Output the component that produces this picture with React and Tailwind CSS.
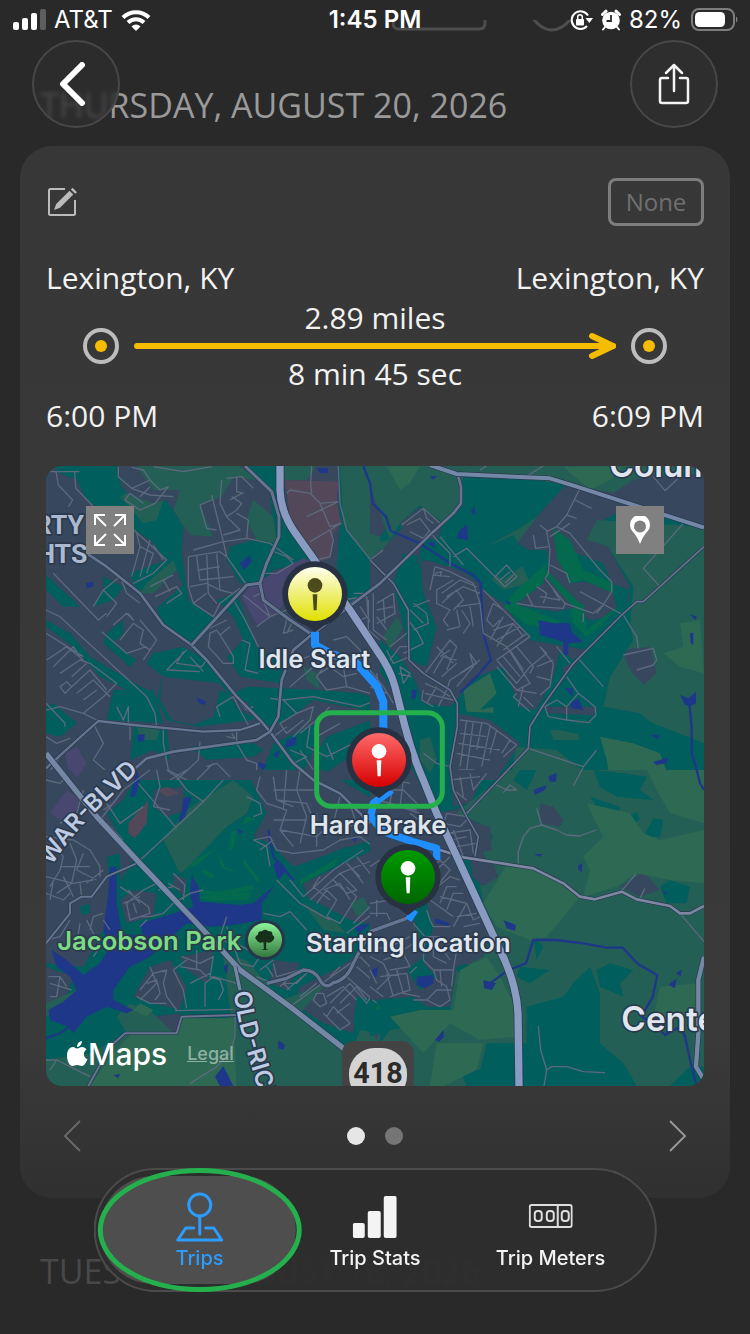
import React from 'react';

// The map is drawn in four tiles, each with its own origin.
const tiles = [
  {
    x: 0,
    y: 0,
    urban: 'M18 18H1020V960H18Z',
    wood: [
      'M40 18 230 18 245 80 300 150 380 120 430 200 425 280 445 420 520 475 460 555 365 490 350 445 430 375 405 320 330 380 290 395 270 340 380 300 330 240 250 190 140 120 110 60 60 40Z',
      'M620 18 725 18 730 150 770 230 820 300 700 330 660 375 600 370 560 300 570 260 640 240 700 230 690 100Z',
      'M18 345 100 420 120 440 70 440 18 390Z M18 480 90 520 150 590 320 690 330 720 280 700 180 650 100 560 18 500Z',
      'M190 350 250 380 220 420 160 440 190 390Z M200 520 250 480 250 520 220 550 290 600 270 620 190 550Z',
      'M340 580 430 560 500 600 580 700 620 680 830 690 960 700 1020 720 1020 760 820 720 740 780 690 800 600 750 540 670 370 650 320 610Z',
      'M365 650 350 720 380 780 470 800 640 780 625 730 585 710 540 690 520 770 460 795 395 780 360 720Z',
      'M280 690 340 690 370 790 200 780 220 690Z M40 730 110 790 60 830 18 820 18 740Z M280 800 380 800 390 900 340 870 270 900Z',
      'M530 420 590 400 650 560 700 590 740 620 720 670 600 650 560 590 610 540 580 470Z',
      'M895 18 1020 18 1020 370 940 430 900 400 890 320 900 200Z M450 860 550 850 640 850 670 870 640 890 500 900Z M700 850 830 790 820 870 780 960 720 960 670 930Z',
      'M860 830 1020 770 1020 830 870 930 830 960 830 880Z',
    ],
    field: [
      'M290 18 600 18 650 60 580 50 545 110 480 135 520 230 450 225 400 150 420 90 340 90Z',
      'M640 120 700 170 710 250 650 240 620 180Z M730 18 830 18 800 60 735 60Z M900 18 1020 18 1020 330 960 260 910 190Z',
      'M400 300 410 330 340 400 300 400 320 370Z M340 130 370 120 350 180 310 190 240 110 260 100Z M290 800 360 810 350 840 300 840Z M790 620 830 640 840 690 800 660Z',
    ],
    olive: [],
    golf: [],
    purple: ['M640 370 700 340 790 295 830 310 780 350 740 420 700 470 650 495 605 410Z M75 880 110 860 140 910 115 950 85 930Z'],
    brick: ['M735 60 895 65 890 130 905 190 880 220 870 295 840 305 790 240 750 170Z'],
    water: ['M600 310 630 285 635 305 612 330Z M138 370 160 365 160 380 140 385Z M470 712 500 725 490 735 475 728Z M290 825 315 822 312 843 295 845Z M740 840 770 830 765 855 735 865Z M700 885 720 870 712 895Z M655 905 680 915 670 930 655 920Z M830 25 865 25 862 40 840 38Z'],
    streets: [
      'M18 35 118 35M48 35 55 75 98 120 85 140M104 35 107 85 170 150 185 190M235 20 235 50 275 85 330 105 400 110M275 85 330 60 360 90 385 80 345 130 300 150 255 120 270 100 310 130M330 60 310 30 275 22M300 110 330 80M340 20 430 35 515 20',
      'M515 105 550 245 560 290 620 375M550 245 460 270M550 245 620 235 690 250 760 300M480 135 515 120M480 135 500 205 530 210M560 55 605 50 640 85M545 60 540 130 560 170 600 210 550 225M590 50 590 95 612 100M560 170 590 150 605 130 575 110M620 235 625 180 590 160M605 100 570 120',
      'M445 290 540 275 560 290M445 290 445 380 460 430 520 470 540 430 600 385M470 285 475 330 540 320M500 280 505 400 530 430M475 330 480 360 580 350M530 280 540 390 580 400M450 380 500 370 540 390M460 430 500 400',
      'M260 190 380 300 340 340 280 370M290 220 300 260 275 350M330 240 300 350M300 260 340 280 320 340M340 255 370 300',
      'M160 440 190 390 240 350 260 400 300 430M190 390 230 430 200 470M240 350 290 390M330 380 400 345M345 410 410 380 425 400 380 430M370 360 390 395M200 460 175 480 40 340M220 495 260 460 280 480 265 460M240 540 280 490 310 510 300 550 330 570 350 540 310 600M185 515 260 580 320 560M350 540 300 480',
      'M18 450 60 470 320 710 345 760 350 800M18 520 130 590M20 600 80 560 130 600M40 620 100 560 120 590M60 640 120 600 150 610 190 640 230 670 190 710 130 760M95 650 140 610M60 680 80 665 95 680 75 700ZM95 680 150 630 200 690M110 700 160 660 210 710M130 720 170 690M230 740 250 780 265 740 265 790M18 750 60 740 130 760 170 780M18 730 75 790 75 800M270 795 270 840M370 800 370 850 385 930 440 960',
      'M510 520 530 510 550 540 580 590 580 610 550 610 505 560ZM500 510 560 480M540 525 570 500M380 630 440 570M430 575 410 610 485 620 500 600M450 590 490 635M380 630 480 635M580 420 610 470 655 560M605 540 630 550 615 630 655 640M590 710 620 750 640 740M540 770 530 740 580 710 600 750 625 795M590 815 590 850 620 900 650 910 650 960M560 830 585 835 575 820M480 845 475 900 410 960M500 920 530 910 570 950M470 960 520 910',
      'M740 100 750 90 810 100 840 130 895 125M815 18 812 70 815 100M800 170 895 125M840 130 870 200 905 190M810 245 870 210 880 240 870 290 830 300M870 210 900 190M895 18 900 130 920 210 1000 310M610 405 690 470 740 450M640 410 660 400 690 470 650 500M690 270 740 290 760 310M670 340 710 340 760 310M700 440 740 480 730 520 760 510M760 480 740 520',
      'M780 600 850 570 860 610 830 650 860 690 920 680 990 700M860 600 910 620 920 680M880 540 920 530 960 570 1000 640M820 620 750 680M840 640 870 620 910 650 950 640M690 715 730 720 820 710 960 740 1010 720M730 720 770 760 720 790 740 820 790 780M770 760 820 740 810 780 760 830M740 800 700 830M780 820 830 780 870 740M810 800 800 860 860 890 1000 820M830 830 900 790M750 870 800 890 760 910M780 870 820 930M860 850 880 900',
      'M1000 410 1000 500 960 440M905 420 980 410 985 470 960 480M930 430 975 400 940 400M985 420 985 510 1020 540M18 830 50 850 90 835M18 950 60 890M390 960 440 930M160 790 190 850 160 900 230 960',
    ],
  },
  {
    x: 990,
    y: 0,
    urban: 'M140 310 190 150 100 190 150 140 220 190 200 240 140 230 100 200 40 260 0 300V500L30 540 90 590 130 650 150 700 160 730 240 740 320 650 400 620 450 740 500 750 550 650 570 570 610 600 650 570 480 540 400 430 340 390 320 350 240 320 170 300Z M0 90 60 190 30 230 0 220Z M100 280 150 290 160 400 200 500 170 620 120 600 100 500 70 370Z M370 340 430 290 440 350 400 380Z M440 250 500 170 600 60 700 30 850 50 1002 30 1002 200 800 130 700 180 650 230 720 270 780 380 780 410 750 470 660 480 590 440 530 450 440 430 520 370 540 320 530 270 480 270Z M580 620 680 580 630 650 680 740 660 790 550 780 520 740 580 700Z M770 550 850 570 860 640 820 675 760 610Z M260 760 360 780 450 850 380 960 240 960Z M0 600 40 650 90 730 130 960 0 960Z',
    wood: [],
    field: [
      'M0 18 1002 18 1002 40 850 50 740 100 500 60 280 45 270 130 230 180 350 260 440 210 500 170 440 280 480 370 400 390 300 300 220 190 150 135 90 190 60 240 0 80Z',
      'M650 240 680 180 1002 200 1002 860 880 820 810 760 700 740 720 650 780 540 700 560 780 500 790 380 720 270Z',
      'M440 860 560 870 650 940 660 960 420 960Z M540 810 620 810 630 840 550 840Z M150 840 180 830 200 900 180 940 150 900Z M40 530 80 470 100 500 60 570Z M0 250 60 240 30 280Z',
    ],
    urbanTop: 'M90 190 150 140 210 190 180 235 110 225Z M440 250 500 175 540 175 600 85 640 80 720 105 790 60 860 40 930 60 1002 40 1002 200 800 140 730 150 680 180 650 240 720 260 700 310 780 400 720 470 620 440 560 455 440 435 520 370 540 310 530 265 480 270Z M755 570 840 560 860 640 820 675 780 630Z',
    woodTop: 'M240 165 350 260 430 225 480 300 400 360 370 340 430 290 340 380 250 310 200 240Z M690 520 780 500 790 540 720 650 690 740 500 740 640 590Z M530 760 800 770 1002 850 1002 880 850 870 520 800Z M720 370 780 390 760 460 650 550 600 500 660 500 740 440Z M620 280 700 310 725 370 720 395 650 365 600 370Z',
    olive: [
      'M50 18 150 18 120 70 90 90Z M280 690 360 640 380 700 330 750 370 740 370 758 290 755Z M930 490 990 480 1002 640 930 620 880 580 940 560Z M690 830 790 850 870 880 900 960 720 960 710 900Z',
      'M580 20 760 20 720 60 660 90Z',
    ],
    golf: ['M550 205 600 240 640 330 730 370 730 400 640 360 600 370 560 290Z M530 330 640 440 640 470 590 420 520 340Z M400 440 440 390 530 310 520 370 440 430 480 500Z M430 430 560 480 650 550 600 520 460 490Z M600 450 640 430 650 510 740 440 760 420 690 500 650 530 610 490Z'],
    purple: [],
    brick: [],
    water: ['M505 480 550 490 600 490 605 515 640 545 595 550 595 585 580 585 580 545 510 525Z M290 195 295 240 260 235 270 210Z M315 138 315 165 302 155Z M180 50 202 47 190 60Z M170 250 195 245 192 262Z M600 730 625 715 640 750 605 745Z M585 685 608 685 608 710Z M125 690 140 690 138 715 125 718Z M960 520 970 518 970 555 962 550Z M930 705 955 715 978 695 978 730 960 738 945 735Z M850 905 895 893 890 910 858 915Z M840 825 865 825 865 837Z M545 945 560 935 560 960 540 960Z M405 420 425 428 415 435Z M960 462 982 470 975 480Z'],
    creek: ['M-20 18 0 70 8 130 48 170 62 213 150 250 240 310 310 345 332 370 340 520 363 600 320 650 270 698M958 730 965 800 965 880 990 960'],
    streets: [
      'M0 300 40 270M95 195 160 145 210 190M110 195 150 175 180 215 200 240M120 215 160 235 180 210M160 145 170 175 190 190M200 240 240 280 240 320M210 230 280 315M250 290 290 265 405 380 440 350 410 315 375 350M390 360 420 335M405 370 430 345M330 30 350 18M475 45 520 18M630 85 590 165 560 200 530 215 540 270 535 340 525 355M590 165 620 175M615 120 665 145M510 195 535 215M490 225 497 265 535 260M560 200 600 220 690 330 725 365 725 395 700 435 670 460 585 430 525 355',
      'M540 315 590 340 600 370M440 430 500 440 580 445 585 430M470 400 490 440M500 380 530 400 520 430M510 410 570 420 550 390M630 395 760 465 800 530 805 565M700 435 680 460M640 460 640 485M850 50 885 92 930 50M940 190 820 325 870 380M760 585 850 565 860 600 850 615 800 630M625 595 700 680M590 650 625 700 675 740 678 765 655 788 590 780 535 770 525 740 560 720 590 740 590 780M625 700 590 740',
      'M195 320 240 335 310 370 330 430 340 520 410 560 480 670 440 690M195 320 180 390M190 345 240 350M195 340 215 335 210 350M250 360 200 390 200 430 240 450 220 480 235 500M215 400 270 360 320 380M230 410 280 380 330 400M215 430 260 390 280 420 250 450M260 440 330 430M260 450 270 500 230 510M275 450 300 490 280 520M300 440 310 500M180 420 130 440',
      'M340 390 480 530 380 600M370 430 350 480 370 500 390 480M370 510 430 490 460 530M380 540 450 500M400 570 470 520M400 470 360 540M430 490 380 560M400 450 370 430M380 600 440 670 480 620 530 580 510 560M380 620 440 690 500 700M440 700 430 710 480 755M460 680 445 740M400 590 450 650M420 570 460 630M440 560 490 620 480 640M500 620 550 600M510 560 550 610 540 680 510 705M500 650 540 660M460 710 490 740',
      'M20 430 70 400 75 460 20 490M10 400 10 510 50 540M20 450 70 440M20 470 50 510M40 420 45 490M130 430 170 460 175 490 130 510M120 450 160 490M115 480 145 520M140 510 160 550 100 580M60 560 110 520M50 570 70 610 120 590M60 600 90 560 120 560M90 620 120 640 100 670ZM85 640 125 650',
      'M165 640 240 540 260 560 230 630M190 640 220 590 260 600M215 650 260 610M230 690 240 660 320 610 300 580 310 620 260 680M200 560 250 610M210 590 240 570M270 640 330 600M165 670 210 690 240 710M160 690 155 720 190 740M200 680 170 730M230 690 205 740M165 700 250 720',
      'M270 780 350 790 440 855 400 890M290 780 270 920M310 785 290 930M335 790 320 870M360 800 335 920M380 810 360 880M270 820 350 830M265 850 390 870M260 880 360 900M265 930 310 930 340 960M420 840 395 880M160 880 200 910 240 920M475 865 640 920 680 870M640 920 610 1000M0 630 40 680 70 730M0 680 50 700M20 640 30 720M540 230 600 190M560 560 600 610',
    ],
  },
  {
    x: 0,
    y: 930,
    urban: 'M18 0 300 0 250 90 200 130 280 270 230 350 190 480 130 590 18 580Z M340 60 430 50 440 120 380 140 340 110Z M620 0 850 0 1020 100 1020 200 760 290 690 220 640 200 680 130Z M790 340 1020 230 1020 470 930 450 800 380Z M400 310 440 330 430 380 400 350Z M280 360 350 370 340 440 260 460 240 390Z M330 590 390 570 440 650 420 720 340 700 280 680Z M420 560 520 540 500 640 440 600Z M18 590 100 620 80 680 18 700Z M700 570 780 580 740 660 690 640Z M780 650 900 590 1020 500 1020 750 950 700 940 790 850 760 760 700Z M330 740 420 730 420 790 330 790Z M18 870 100 900 150 948 18 948Z',
    wood: ['M120 410 150 400 150 430 125 435Z M200 260 240 250 240 340 210 350Z M820 270 920 230 950 240 870 290 780 300Z M950 680 1020 690 1020 790 940 760Z'],
    field: [
      'M440 120 580 30 640 80 620 130 560 170 440 295 420 310 370 210Z M270 700 340 730 400 790 430 790 590 735 600 948 18 948 18 870 150 850 260 790 230 740Z M550 560 620 570 760 730 910 840 910 948 600 948Z M790 400 890 460 920 490 850 480Z M930 400 970 380 990 420 950 440Z M1020 790 960 780 940 830 1020 850Z M18 700 110 660 90 700 18 740Z M860 640 770 740 700 700Z',
    ],
    olive: ['M430 745 580 745 590 948 150 948 220 850 270 795 410 795Z M300 700 340 720 320 740 280 720Z'],
    golf: [
      'M435 300 465 270 530 235 470 285Z M530 240 555 290 600 310 545 295Z M480 300 510 325 530 320 500 300Z M565 240 575 185 590 180 580 235Z M620 140 650 145 605 165Z M610 265 660 330 650 335 610 280Z M435 355 530 365 640 345 640 360 530 380Z',
      'M450 380 600 368 640 365 620 390 520 392Z M780 330 900 260 880 290 780 345Z',
    ],
    purple: ['M30 130 80 60 120 90 100 140 60 150Z M90 0 130 0 110 20Z'],
    brick: ['M265 160 325 90 320 160 285 205 265 190Z M350 60 380 50 420 70 380 80Z'],
    water: [
      'M210 290 230 290 230 400 245 490 310 500 300 460 370 440 460 410 450 370 455 315 475 350 480 395 600 405 640 400 705 345 665 400 665 450 580 465 510 470 440 460 330 560 270 590 220 660 220 690 280 720 260 730 200 710 140 740 100 790 85 770 30 750 25 720 70 695 110 660 90 620 50 590 35 540 80 570 130 615 180 580 210 530 190 480 205 370Z',
      'M270 80 290 0 300 30 285 80Z M430 85 455 80 435 140 415 160 425 120Z M700 285 715 270 740 300 715 330Z M940 470 990 460 960 490Z M1000 600 1015 595 1010 620Z M715 810 735 825 730 840 715 835Z M525 920 550 888 580 948 540 948Z M550 590 565 580 560 615Z M590 175 608 185 598 192Z M220 915 240 912 235 925Z M930 205 955 200 945 215Z',
    ],
    creek: ['M18 805 60 790 100 760M685 180 700 260 760 330'],
    streets: [
      'M18 30 60 40 80 20M60 160 110 130 130 60M290 280 490 95 440 60 410 20 380 0M490 95 550 30M295 40 410 175M180 150 250 60 330 0M190 120 220 100 250 60M350 0 360 50 340 110 390 120M200 100 240 160 310 110M18 200 100 210 150 240 180 290 180 320M30 210 70 260 60 300 30 350M90 220 110 270 95 340 50 370M18 320 100 340 160 330M130 250 110 300 170 330M60 290 150 290M18 370 70 390 90 370M40 330 30 390M70 320 100 380M140 340 190 300M125 380 120 340M155 380 180 350M190 430 160 440 150 480M90 450 60 500 20 510M120 460 110 520 80 540M140 450 180 530 160 560M190 450 210 480',
      'M240 350 270 370 325 410 330 430 270 450 260 400 310 360 350 340M265 360 300 400M250 400 300 380M290 430 280 400M300 440 330 440 370 430 400 400 450 370 490 360M400 310 435 345 430 390M385 340 420 360M355 360 400 350M300 470 320 450',
      'M640 210 690 200 710 240 760 250 850 240 900 210 960 200M640 210 680 230 690 290M660 240 700 210M660 20 650 60 680 100 740 120 720 180 760 230M700 20 710 90 760 110M740 0 730 120M780 0 770 60 800 140 780 220M700 60 820 60M710 90 800 100 820 150M700 150 800 150M720 180 830 200 860 170M830 130 830 230M900 80 880 160 860 200M850 160 960 170M930 100 960 200 1000 230M620 80 660 100 665 130 640 140',
      'M790 380 880 300 970 240M810 390 900 310 1000 270M830 400 860 360 890 390 860 440M850 360 900 340 930 390M880 330 920 370 950 360 920 330M900 310 940 350M930 290 970 340M860 440 900 460 950 380 920 350M840 320 820 350 870 390M920 280 960 320M950 260 990 310 1010 290M670 430 720 440 750 425 800 480M710 330 780 400 870 450M750 330 790 380M940 460 1000 400M920 490 1000 430',
      'M300 660 340 610 380 600 370 640 380 680 410 720M330 590 350 640 300 690M320 640 350 630 360 670 345 690M290 680 330 700 380 700M405 722 580 718M425 560 480 580 520 560 510 620 540 630M440 570 400 600 430 660 440 715M420 590 480 600 500 620M450 640 510 610M495 710 495 640 520 620 590 640M540 630 550 660 535 690M470 540 470 600M25 620 60 620 50 680 30 680M30 640 95 660M60 620 80 650',
      'M700 580 710 620 780 600M720 650 760 610M740 660 800 610 770 640 730 640 750 660M680 590 700 620M750 710 860 630 960 560M780 680 830 640M830 670 850 670 860 700 840 710 820 690ZM850 730 900 780 930 760 880 710 860 740M860 680 910 650 950 690M870 700 930 640M900 700 950 650 980 690M930 640 980 700 1010 650M920 620 1010 700M950 590 1020 650M870 620 900 590M960 560 1000 600 1010 580M890 730 930 700',
      'M18 870 50 870 150 920M30 900 50 870M585 735 585 800 570 850 530 890 450 940M560 470 600 580 640 590 660 560 590 520 570 540M560 440 540 500 590 540M660 600 700 570M650 620 700 640M250 210 200 160',
    ],
  },
  {
    x: 990,
    y: 930,
    urban: 'M0 0 130 0 250 270 360 500 330 580 260 590 240 710 170 710 130 680 0 690Z M240 0 350 0 300 100 250 110Z M510 100 550 110 580 150 570 170 510 160Z M320 160 360 170 365 240 340 250 380 330 340 345 305 300 300 260 260 250 200 130 290 110Z M380 10 450 60 400 70Z M750 350 820 305 870 360 810 380Z M0 780 40 770 20 810Z M990 680 1002 670 1002 790 990 780Z',
    wood: [],
    field: [
      'M270 120 420 0 1002 0 1002 948 130 948 150 850 200 800 240 720 260 600 340 560 360 500 330 345 380 320 340 250 370 200 330 160 260 130Z',
      'M0 860 60 780 120 770 180 800 150 948 0 948Z',
    ],
    woodTop: 'M470 710 580 680 610 640 660 590 690 670 690 820 760 880 800 948 470 948Z M350 820 500 820 480 948 290 948 260 880 330 900Z M680 600 720 580 790 600 750 640 760 680 690 650Z M870 350 900 330 960 350 950 400 890 400Z M660 80 750 110 740 155 700 140Z M820 200 850 145 880 150 870 200Z M450 0 500 0 470 60 430 30Z M670 0 760 10 830 20 810 60 850 90 740 80 690 50Z M130 180 170 400 190 470 160 580 200 620 150 660 110 600 160 560 130 440Z M490 500 520 530 500 570Z M970 190 1002 200 1002 290 980 270Z M960 890 1002 890 1002 948 900 948Z M0 690 60 720 60 780 0 800Z M280 580 330 600 280 620 260 600Z M760 145 800 125 810 150 770 170Z M450 590 540 600 480 640 440 620Z',
    urbanTop: 'M510 100 550 110 580 150 570 170 510 160Z M320 160 360 170 365 240 310 250Z M310 285 370 280 385 320 340 348 305 320Z M750 350 820 305 870 360 810 380Z',
    olive: [
      'M410 285 490 295 590 345 630 380 530 500 480 510 380 470 340 400Z M640 380 660 300 640 260 700 200 650 100 780 130 820 190 870 210 1002 180 1002 340 900 330 800 310 740 350Z M830 0 1002 0 1002 160 900 130 860 60Z M270 600 350 560 390 620 430 700 440 800 330 810 240 760 160 850 60 740 150 720 250 720Z M200 820 340 820 320 900 220 948 180 948Z M870 650 980 640 980 740 850 740Z',
    ],
    golf: ['M10 715 30 705 30 720Z'],
    purple: [],
    brick: [],
    water: ['M140 620 190 615 190 640 165 655 140 645Z M195 445 240 460 235 468 195 460Z M400 450 438 465 435 482 410 475Z M340 630 378 640 365 660 342 655Z M490 60 530 45 525 60 495 75Z M535 20 560 8 558 35 540 35Z M625 285 637 280 635 307 625 300Z M895 645 920 625 915 655Z M918 610 935 598 932 620Z M195 810 220 780 222 800 208 815Z M490 252 518 252 510 260Z M5 600 25 590 20 620 8 620Z M878 362 892 368 885 375Z'],
    creek: ['M360 640 415 600 468 580 490 510 560 510 640 520 710 533 758 533 805 583 862 615 848 680 815 740 855 765 885 795 930 770 945 800 960 870 980 948M980 0 990 40 1002 60'],
    streets: [
      'M445 280 445 245 460 200 480 175 515 165 560 180 590 195 630 198 678 180M515 165 500 115M635 0 610 48M930 430 1002 515M755 362 798 312M810 385 825 355M505 768 512 840 530 900 522 948M530 900 545 890 590 890 640 905 705 908M370 40 410 60 440 60 420 45 400 68M240 30 330 20M250 60 290 90M270 20 280 80M300 10 310 60 350 10M210 200 230 130 290 140M230 190 300 180 310 250M250 180 280 260M240 210 290 200M260 230 320 220M270 170 290 150M220 160 270 170',
      'M20 20 120 40M0 60 100 60 140 100M40 40 30 110M70 40 60 100M100 30 90 110 150 130M20 90 140 120M120 130 160 160M0 290 30 270M0 400 60 390 80 410M0 430 50 430 60 450M20 390 20 440M170 310 210 270 240 300 200 350M210 400 230 350 260 350M230 420 250 370 280 370M190 360 240 320 270 330M210 380 250 390 290 400M170 420 180 450 190 470 240 470M250 470 290 400 310 450 330 440M260 440 320 430M280 470 330 460M200 300 240 260M180 390 250 440',
      'M130 460 165 500 160 570 190 600 200 630 230 650 240 690 210 710 170 690 130 690M0 540 60 530 120 500M0 560 40 580 60 620 20 660M40 570 100 550 120 590 60 600M60 530 80 570M30 620 110 610 120 660 60 680M50 610 70 680M80 600 100 670 150 680M0 650 40 680M100 540 130 520M190 600 250 600 245 650M210 600 215 650M170 690 200 660 245 660M165 500 210 500 260 540 250 600M190 500 190 560 230 580M220 540 240 570M0 600 20 640M120 610 140 590',
    ],
  },
];

const joined = (list) => (list || []).join(' ');

function MapTile({ tile }) {
  return (
    <g transform={`translate(${tile.x} ${tile.y})`}>
      <path d={tile.urban} fill="#37475e" />
      <path d={joined(tile.wood)} fill="#005e5c" />
      <path d={joined(tile.field)} fill="#245f56" />
      <path d={tile.urbanTop || ''} fill="#37475e" />
      <path d={tile.woodTop || ''} fill="#005e5c" />
      <path d={joined(tile.olive)} fill="#2e6953" />
      <path d={joined(tile.golf)} fill="#046a4e" />
      <path d={joined(tile.purple)} fill="#47476f" />
      <path d={joined(tile.brick)} fill="#53475a" />
      <path d={joined(tile.water)} fill="#1e3788" />
      <path d={joined(tile.creek)} fill="none" stroke="#1e3788" strokeWidth="7" />
      <path d={joined(tile.streets)} fill="none" stroke="#5d697d" strokeWidth="4" strokeLinejoin="round" />
    </g>
  );
}

function Road({ d, width, color = '#65748f' }) {
  return (
    <g fill="none" strokeLinejoin="round">
      <path d={d} stroke="#2a3850" strokeWidth={width + 4} />
      <path d={d} stroke={color} strokeWidth={width} />
    </g>
  );
}

function Pin({ x, y, fill, ink = '#ffffff' }) {
  return (
    <g>
      <path d={`M${x - 45} ${y + 80} ${x} ${y + 115} ${x + 45} ${y + 80}Z`} fill="#273142" />
      <circle cx={x} cy={y} r="98" fill="#273142" />
      <circle cx={x} cy={y} r="81" fill={fill} />
      <circle cx={x} cy={y - 26} r="22" fill={ink} />
      <path d={`M${x - 7} ${y + 1}h14l-2 48h-9Z`} fill={ink} />
    </g>
  );
}

function MapDrawing() {
  return (
    <svg
      viewBox="18 18 1974 1860"
      preserveAspectRatio="xMidYMid slice"
      className="block h-full w-full"
      role="img"
      aria-label="Trip route map"
    >
      <defs>
        <linearGradient id="yellow" x2="0" y2="1">
          <stop offset="0" stopColor="#ffffee" />
          <stop offset="1" stopColor="#e0e000" />
        </linearGradient>
        <linearGradient id="red" x2="0" y2="1">
          <stop offset="0" stopColor="#ff6a6a" />
          <stop offset="1" stopColor="#d60000" />
        </linearGradient>
        <linearGradient id="green" x2="0" y2="1">
          <stop offset="0" stopColor="#009a00" />
          <stop offset="1" stopColor="#006600" />
        </linearGradient>
        <linearGradient id="park" x2="0" y2="1">
          <stop offset="0" stopColor="#8cf598" />
          <stop offset="1" stopColor="#35783f" />
        </linearGradient>
        <path id="warBlvd" d="M-22 1284 L52 1192 Q100 1120 170 1052 L360 872" />
        <path id="oldRich" d="M582 1596 Q590 1670 612 1745 L690 2010" />
      </defs>

      <rect x="18" y="18" width="1974" height="1860" fill="#005e5c" />
      {tiles.map((tile) => (
        <MapTile key={`${tile.x}-${tile.y}`} tile={tile} />
      ))}

      <Road d="M990 300 1060 370 1105 450 1107 600 1150 640 1230 690 1252 730 1252 800 1230 920 1240 990 1280 1070 1315 1130 1305 1190" width={5} />
      <Road d="M1992 260 1810 425 1790 425 1745 465 1600 610 1510 735 1470 800 1465 865 1375 960 1280 1060" width={5} />
      <Road d="M18 1450 90 1360 90 1330 125 1310 155 1310 200 1250 290 1210" width={6} />
      <Road d="M145 1878 210 1760 255 1720 410 1720 425 1670 590 1665" width={6} />
      <Road d="M680 1570 740 1555 790 1530Q825 1530 840 1560T880 1568Q920 1560 940 1510L990 1415 1100 1375" width={10} />
      <Road d="M140 280 200 320 300 400 370 495 455 555 500 600 590 710 660 780 690 815 760 910 820 960 900 1000 990 1090" width={8} />
      <Road d="M455 555 560 440 620 375 660 370 680 310 717 230 717 170 695 95 615 18M660 370 670 420 750 480 810 520" width={9} />
      <Road d="M280 930 320 895 400 875 650 840 690 815 715 770 725 660 760 570 820 520 1020 370 1180 215 1240 160 1263 130 1263 80 1252 40" width={8} />
      <Road d="M660 790 600 810 490 815 280 795 175 783 100 850 18 925" width={7} />
      <Road d="M1200 1170 1270 1192 1480 1225 1570 1270 1620 1310 1665 1318 1745 1295 1790 1318 1890 1338 1920 1360 1950 1360 1992 1338" width={8} color="#7d87a0" />
      <Road d="M1170 15 1250 42 1530 55 1610 80 1992 203" width={12} color="#7388a6" />
      <Road d="M18 880 170 1070 300 1210 490 1410 600 1530 750 1640 930 1780" width={16} color="#7488a5" />
      <Road d="M1992 1490 1975 1560 1975 1720 1968 1820 1992 1860" width={13} color="#7488a5" />
      <Road d="M585 1520 600 1590" width={10} color="#7488a5" />
      <Road
        d="M720 18V90Q722 160 770 225L930 450 1010 570Q1050 625 1065 680L1095 800Q1115 880 1150 960L1190 1060 1260 1210 1380 1470Q1430 1570 1434 1660L1437 1880"
        width={22}
        color="#8a9bc2"
      />

      <g fill="none" stroke="#1f8fff" strokeLinejoin="round">
        <path d="M825 515V555L870 580 950 610 1012 680 1030 725V830" strokeWidth="24" />
        <path d="M1055 990 1000 1030 992 1070 1030 1115 1120 1145 1190 1165V1200" strokeWidth="22" />
        <path d="M1125 1350 1105 1380" strokeWidth="22" />
      </g>

      <g
        fontFamily="Inter, Arial, sans-serif"
        fontWeight="600"
        fontSize="77"
        fill="#dfe6ee"
        stroke="#2c394c"
        strokeWidth="10"
        strokeLinejoin="round"
        paintOrder="stroke"
        textAnchor="middle"
      >
        <text x="823" y="624">Idle Start</text>
        <text x="1014" y="1123">Hard Brake</text>
        <text x="1105" y="1476">Starting location</text>
        <text x="328" y="1470" fill="#7cdc83">Jacobson Park</text>
        <text x="1708" y="52" fontSize="100" textAnchor="start">Colum</text>
        <text x="1744" y="1712" fontSize="100" textAnchor="start">Cente</text>
        <g fontFamily="'Liberation Sans Narrow', Roboto, Arial, sans-serif" fontWeight="700" fill="#aab9d0">
          <text x="132" y="221" fontSize="80" textAnchor="end">RTY</text>
          <text x="142" y="308" fontSize="80" textAnchor="end">HTS</text>
        </g>
        <g fill="#bccae2" fontSize="72" textAnchor="start">
          <text>
            <textPath href="#warBlvd">O-WAR-BLVD</textPath>
          </text>
          <text>
            <textPath href="#oldRich">OLD-RICHMOND</textPath>
          </text>
        </g>
      </g>

      <circle cx="675" cy="1440" r="60" fill="#28364b" />
      <circle cx="675" cy="1440" r="51" fill="url(#park)" />
      <path d="M672 1467 670 1446Q655 1452 650 1440 640 1430 654 1424 654 1412 665 1414 675 1404 686 1414 698 1412 697 1424 708 1432 698 1442 690 1452 679 1446L678 1467 686 1470H664Z" fill="#17301b" />

      <rect x="906" y="1743" width="215" height="180" rx="36" fill="#434343" />
      <rect x="927" y="1764" width="174" height="160" rx="76" fill="#d3d3d3" />
      <text
        x="1014"
        y="1868"
        fontFamily="'Liberation Sans Narrow', Roboto, Arial, sans-serif"
        fontWeight="700"
        fontSize="86"
        fill="#2b2b2b"
        textAnchor="middle"
      >
        418
      </text>

      <Pin x={825} y={402} fill="url(#yellow)" ink="#4b4b1c" />
      <Pin x={1017} y={900} fill="url(#red)" />
      <Pin x={1104} y={1251} fill="url(#green)" />
      <rect x="830" y="758" width="377" height="281" rx="44" fill="none" stroke="#24b14d" strokeWidth="15" />
    </svg>
  );
}

function StatusBar() {
  return (
    <div className="grid h-10 grid-cols-3 items-center px-3 font-[Inter,Arial,sans-serif] text-2xl text-white">
      <div className="flex items-center gap-2">
        <svg width="34" height="22" viewBox="0 0 34 22" fill="#fff" aria-hidden="true">
          <rect x="1" y="13" width="6" height="8" rx="2" />
          <rect x="10" y="9" width="6" height="12" rx="2" />
          <rect x="19" y="4" width="6" height="17" rx="2" />
          <rect x="28" y="0" width="6" height="21" rx="2" opacity=".25" />
        </svg>
        <span>AT&amp;T</span>
        <svg width="30" height="22" viewBox="0 0 30 22" aria-hidden="true">
          <g fill="none" stroke="#fff" strokeWidth="4">
            <path d="M2 8.500a18.500 18.500 0 0 1 26 0" />
            <path d="M7 13.500a11.500 11.500 0 0 1 16 0" />
          </g>
          <path d="M15 22l-4.500-4.600a6.400 6.400 0 0 1 9 0Z" fill="#fff" />
        </svg>
      </div>
      <div className="text-center font-semibold">1:45 PM</div>
      <div className="flex items-center justify-end gap-2">
        <svg width="23" height="22" viewBox="0 0 23 22" aria-hidden="true">
          <path d="M18 6.500A8.800 8.800 0 1 0 17 17" fill="none" stroke="#fff" strokeWidth="2" />
          <path d="M15.500 9h7.500l-3.700 5Z" fill="#fff" />
          <rect x="6" y="10" width="8" height="6.500" rx="1" fill="#fff" />
          <path d="M7.700 10V8a2.300 2.300 0 0 1 4.600 0v2" fill="none" stroke="#fff" strokeWidth="1.500" />
        </svg>
        <svg width="20" height="22" viewBox="0 0 20 22" aria-hidden="true">
          <circle cx="10" cy="11.500" r="8.800" fill="#fff" />
          <path d="M1.500 5.500 5 2.200M18.500 5.500 15 2.200" stroke="#fff" strokeWidth="3" strokeLinecap="round" />
          <path d="M4 18l-2 2.500M16 18l2 2.500" stroke="#fff" strokeWidth="2" strokeLinecap="round" />
          <path d="M10 6v6H5.500" fill="none" stroke="#2a2a2a" strokeWidth="1.800" />
        </svg>
        <span>82%</span>
        <svg width="48" height="24" viewBox="0 0 48 24" aria-hidden="true">
          <rect x="2" y="1" width="42" height="21" rx="7" fill="none" stroke="#7d7d7d" strokeWidth="2" />
          <rect x="5" y="4" width="30" height="15" rx="4.500" fill="#fff" />
          <path d="M46 8.500c2 1 2 5 0 6Z" fill="#7d7d7d" />
        </svg>
      </div>
    </div>
  );
}

function Stop() {
  return (
    <div className="flex size-9 shrink-0 items-center justify-center rounded-full border-4 border-[#bdbdbd]">
      <div className="size-3 rounded-full bg-[#f6bd00]" />
    </div>
  );
}

function TripCard() {
  return (
    <article className="rounded-[32px] bg-linear-to-b from-[#373737] via-[#3a3a3a] via-85% to-[#303030] px-[26px] pt-8 pb-3">
      <div className="flex items-center justify-between">
        <button aria-label="Edit trip" className="p-0.5">
          <svg width="30" height="30" viewBox="0 0 30 30" fill="none" aria-hidden="true">
            <path d="M17 2H2.500Q1 2 1 3.500V26.500Q1 28 2.500 28H25.500Q27 28 27 26.500V13" stroke="#bbb" strokeWidth="2" />
            <path d="M6 23l2.200-6L21.500 3.800l3.800 3.800L12 20.800Z" fill="#bbb" />
            <path d="M22.800 2.500 24.500.8 29 5.200 27.200 6.800Z" fill="#bbb" />
          </svg>
        </button>
        <button className="h-12 w-24 rounded-lg border-[3px] border-[#7d7d7d] text-2xl text-[#707070]">None</button>
      </div>

      <div className="mt-8 text-3xl leading-10 text-[#f2f2f2]">
        <div className="flex justify-between">
          <span>Lexington, KY</span>
          <span>Lexington, KY</span>
        </div>
        <div className="flex items-center gap-[15px] px-[37px]">
          <Stop />
          <div className="min-w-0 flex-1 text-center">
            <div>2.89 miles</div>
            <div className="flex h-4 items-center">
              <div className="h-1.5 flex-1 rounded-full bg-[#f6bd00]" />
              <svg className="-ml-7 shrink-0" width="28" height="28" viewBox="0 0 28 28" aria-hidden="true">
                <path d="M4 4 25 14 4 24" fill="none" stroke="#f6bd00" strokeWidth="6" strokeLinecap="round" strokeLinejoin="round" />
              </svg>
            </div>
            <div>8 min 45 sec</div>
          </div>
          <Stop />
        </div>
        <div className="mt-0.5 flex justify-between">
          <span>6:00 PM</span>
          <span>6:09 PM</span>
        </div>
      </div>

      <div className="relative mt-[30px] h-[620px] overflow-hidden rounded-2xl">
        <MapDrawing />
        <button aria-label="Expand map" className="absolute top-10 left-10 flex size-12 items-center justify-center bg-[#808080]">
          <svg width="32" height="32" viewBox="0 0 32 32" fill="none" stroke="#fff" strokeWidth="2" aria-hidden="true">
            <path d="M1 11V1H11M1 1 12 12M21 1H31V11M31 1 20 12M1 21V31H11M1 31 12 20M21 31H31V21M31 31 20 20" />
          </svg>
        </button>
        <button aria-label="Show pins" className="absolute top-10 right-10 flex size-12 items-center justify-center bg-[#808080]">
          <svg width="22" height="28" viewBox="0 0 22 28" aria-hidden="true">
            <path d="M11 28Q8 20 4 16A10 10 0 1 1 18 16Q14 20 11 28Z" fill="#fff" />
            <circle cx="11" cy="10.500" r="6" fill="#808080" />
          </svg>
        </button>
        <div className="absolute bottom-3.5 left-5 flex items-center gap-5 font-[Inter,Arial,sans-serif] text-white">
          <div className="flex items-center text-3xl leading-9 font-medium">
            <svg width="22" height="26" viewBox="0 0 22 26" fill="#fff" aria-hidden="true">
              <path d="M11 7.500C13 7.500 14 6 16 6c2 0 3.600 1 4.600 2.500-4 2.500-3.600 8 .9 9.800C20 22 18 25 16 25c-2 0-2.500-1-4.700-1-2.300 0-3 1-4.800 1C3.500 25 1 20 1 14.500 1 9 4 6 7 6c1.700 0 2.700 1.500 4 1.500Z" />
              <path d="M11 6C10.800 3 13 .5 15.800 0 16 3 14 5.800 11 6Z" />
            </svg>
            <span>Maps</span>
          </div>
          <a href="#legal" className="text-lg font-medium text-[#8fb0a5] underline">Legal</a>
        </div>
      </div>

      <div className="flex h-[100px] items-center justify-between px-4">
        <button aria-label="Previous">
          <svg width="20" height="32" viewBox="0 0 20 32" fill="none" stroke="#686868" strokeWidth="2" aria-hidden="true">
            <path d="M18 1 3 16 18 31" />
          </svg>
        </button>
        <div className="flex gap-5">
          <div className="size-[18px] rounded-full bg-[#e6e6e6]" />
          <div className="size-[18px] rounded-full bg-[#757575]" />
        </div>
        <button aria-label="Next">
          <svg width="20" height="32" viewBox="0 0 20 32" fill="none" stroke="#979797" strokeWidth="2" aria-hidden="true">
            <path d="M2 1 17 16 2 31" />
          </svg>
        </button>
      </div>
    </article>
  );
}

function TabBar() {
  return (
    <nav className="absolute bottom-[42px] left-1/2 grid h-[124px] w-3/4 -translate-x-1/2 grid-cols-3 rounded-full border-2 border-[#4b4b4b] bg-[#2e2e2e]/90 px-4 font-[Inter,Arial,sans-serif] text-xl leading-6 font-medium text-[#f4f4f4] backdrop-blur-[2px]">
      <button className="relative flex flex-col items-center justify-end pb-5 text-[#2c9dff]">
        <span className="absolute inset-y-1.5 -right-2 -left-3 rounded-full bg-[#4e4e4e]" />
        <span className="absolute -inset-y-0.5 -right-3.5 -left-3.5 rounded-[50%] border-[5px] border-[#24b14d]" />
        <svg className="relative mb-1" width="48" height="50" viewBox="0 0 48 50" fill="none" stroke="currentColor" strokeWidth="3" strokeLinecap="round" strokeLinejoin="round" aria-hidden="true">
          <circle cx="24" cy="13" r="11" />
          <path d="M24 24V42M18 36H10L2 48H46L38 36H30" />
        </svg>
        <span className="relative">Trips</span>
      </button>
      <button className="flex flex-col items-center justify-end pb-5">
        <svg className="mb-2" width="44" height="42" viewBox="0 0 44 42" fill="#f4f4f4" aria-hidden="true">
          <rect x="0" y="27" width="12" height="15" rx="2" />
          <rect x="15" y="15" width="13" height="27" rx="2" />
          <rect x="31" y="0" width="13" height="42" rx="2" />
        </svg>
        <span>Trip Stats</span>
      </button>
      <button className="flex flex-col items-center justify-end pb-5">
        <svg className="mb-[18px]" width="44" height="24" viewBox="0 0 44 24" fill="none" stroke="#dedede" strokeWidth="2" aria-hidden="true">
          <rect x="1" y="1" width="42" height="22" rx="2" />
          <path d="M29 1V23" />
          <rect x="6" y="7" width="7" height="10" rx="3" />
          <rect x="18" y="7" width="7" height="10" rx="3" />
          <rect x="33" y="7" width="7" height="10" rx="3" />
        </svg>
        <span>Trip Meters</span>
      </button>
    </nav>
  );
}

function App() {
  return (
    <div className="relative min-h-screen overflow-hidden bg-[#292929] font-['Open_Sans',Arial,sans-serif]">
      <svg className="absolute top-5 right-[176px]" width="182" height="12" viewBox="0 0 182 12" fill="none" stroke="#4d4d4d" strokeWidth="3" aria-hidden="true">
        <path d="M1 0V3Q1 9 7 9H87Q93 9 93 3V0M139 -4Q158 22 178 0" />
      </svg>

      <main className="px-5 pt-20 pb-9">
        <h2 className="px-5 text-[34px] leading-[50px] text-[#9a9a9a]">THURSDAY, AUGUST 20, 2026</h2>
        <div className="mt-4">
          <TripCard />
        </div>
        <h2 className="mt-12 px-5 text-[34px] leading-[50px] text-[#484848]">TUESDAY, AUGUST 18, 2026</h2>
      </main>

      <header className="absolute inset-x-0 top-0">
        <StatusBar />
        <div className="flex justify-between px-8">
          <button aria-label="Back" className="flex size-[88px] items-center justify-center rounded-full border-2 border-[#484848] bg-[#2d2d2d]/75 backdrop-blur-[2px]">
            <svg className="-ml-2" width="28" height="44" viewBox="0 0 28 44" fill="none" stroke="#fff" strokeWidth="6" strokeLinecap="round" strokeLinejoin="round" aria-hidden="true">
              <path d="M24 3 5 22 24 41" />
            </svg>
          </button>
          <button aria-label="Share" className="flex size-[88px] items-center justify-center rounded-full border-2 border-[#484848] bg-[#2e2e2e]">
            <svg width="32" height="42" viewBox="0 0 32 42" fill="none" stroke="#f4f4f4" strokeWidth="2.500" strokeLinecap="round" strokeLinejoin="round" aria-hidden="true">
              <path d="M10 15H4Q2 15 2 17V38Q2 40 4 40H28Q30 40 30 38V17Q30 15 28 15H22M16 28V2M8 10 16 2 24 10" />
            </svg>
          </button>
        </div>
      </header>

      <TabBar />
    </div>
  );
}

export default App;
